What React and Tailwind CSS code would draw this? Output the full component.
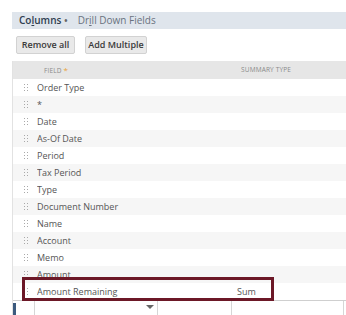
import React from 'react'

const rows = [
  'Order Type',
  '*',
  'Date',
  'As-Of Date',
  'Period',
  'Tax Period',
  'Type',
  'Document Number',
  'Name',
  'Account',
  'Memo',
  'Amount',
]

function Grip() {
  return (
    <svg width="4" height="7" viewBox="0 0 4 7" className="shrink-0">
      {[0, 3, 6].map((y) => (
        <g key={y}>
          <rect x="0" y={y} width="1" height="1" fill="#a9a9a9" />
          <rect x="3" y={y} width="1" height="1" fill="#a9a9a9" />
        </g>
      ))}
    </svg>
  )
}

function Row({ label, summary, shaded }) {
  return (
    <div className={`flex h-[17px] items-center ${shaded ? 'bg-[#f6f6f6]' : 'bg-white'}`}>
      <div className="w-[24px] flex justify-center pl-[1px]">
        <Grip />
      </div>
      <div className="w-[200px] text-[9px] text-[#555] truncate">{label}</div>
      <div className="text-[9px] text-[#555]">{summary}</div>
    </div>
  )
}

export default function App() {
  return (
    <div
      className="w-[346px] h-[315px] overflow-hidden bg-white pl-[12px] pt-[12px]"
      style={{ fontFamily: '"Open Sans", "Liberation Sans", sans-serif' }}
    >
      <div className="h-[17px] bg-[#dfe5ec] flex items-center gap-[10px] pl-[7px] text-[10px]">
        <span className="font-semibold text-[#2f3e50]">
          Co<span className="underline">l</span>umns <span className="text-[#666]">•</span>
        </span>
        <span className="text-[#6a7380]">
          Dr<span className="underline">i</span>ll Down Fields
        </span>
      </div>

      <div className="h-[32px] flex items-center gap-[10px] pl-[4px]">
        <button className="h-[18px] w-[59px] bg-[#e9e9e9] border border-[#d2d2d2] rounded-[2px] text-[9px] font-semibold text-[#3a3a3a]">
          Remove all
        </button>
        <button className="h-[18px] w-[62px] bg-[#e9e9e9] border border-[#d2d2d2] rounded-[2px] text-[9px] font-semibold text-[#3a3a3a]">
          Add Multiple
        </button>
      </div>

      <div className="border-l border-[#e2e2e2]">
        <div className="h-[18px] bg-[#e6e6e6] flex items-center text-[6.5px] text-[#8a8a8a] tracking-wide">
          <div className="w-[31px]" />
          <div className="w-[197px]">
            FIELD <span className="text-[#e8a33d] text-[8px]">*</span>
          </div>
          <div>SUMMARY TYPE</div>
        </div>

        {rows.map((r, i) => (
          <Row key={r} label={r} shaded={i % 2 === 1} />
        ))}

        <div className="relative">
          <Row label="Amount Remaining" summary="Sum" shaded={false} />
          <div className="absolute left-[9px] top-[-6px] w-[252px] h-[24px] border-[3px] border-[#6c1827]" />
        </div>

        <div className="flex h-[16px] border-t border-[#cfcfcf]">
          <div className="w-[21px] pt-[2px]">
            <div className="w-[3px] h-full bg-[#3c5a7e]" />
          </div>
          <div className="w-[124px] border-l border-r border-[#d6d6d6] flex justify-end pr-[3px] pt-[4px]">
            <svg width="8" height="4" viewBox="0 0 8 4">
              <path d="M0 0 L8 0 L4 4 Z" fill="#666" />
            </svg>
          </div>
          <div className="w-[74px] border-r border-[#d6d6d6]" />
          <div className="w-[112px] border-r border-[#d6d6d6]" />
        </div>
      </div>
    </div>
  )
}
